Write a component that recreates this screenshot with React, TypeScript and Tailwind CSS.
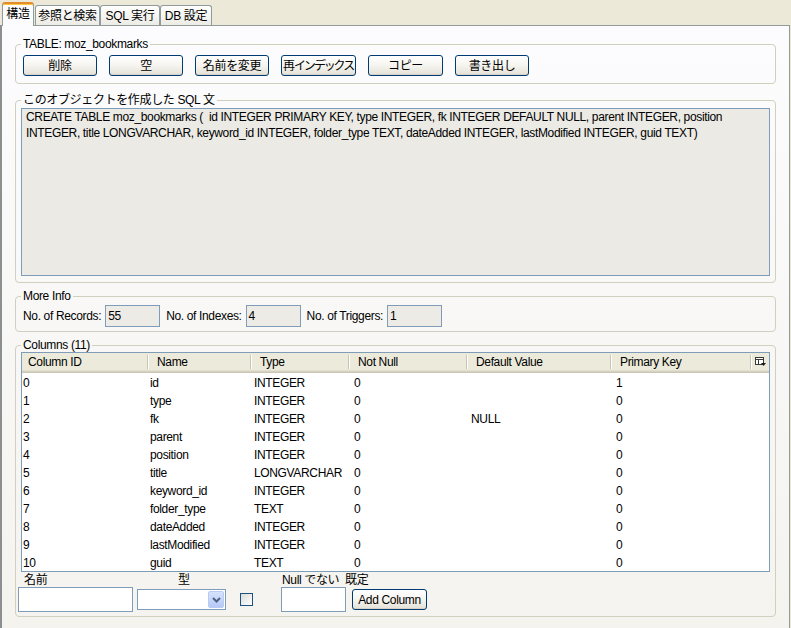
import React from "react";

type Row = { id: string; name: string; type: string; notNull: string; def: string; pk: string };

const rows: Row[] = [
  { id: "0", name: "id", type: "INTEGER", notNull: "0", def: "", pk: "1" },
  { id: "1", name: "type", type: "INTEGER", notNull: "0", def: "", pk: "0" },
  { id: "2", name: "fk", type: "INTEGER", notNull: "0", def: "NULL", pk: "0" },
  { id: "3", name: "parent", type: "INTEGER", notNull: "0", def: "", pk: "0" },
  { id: "4", name: "position", type: "INTEGER", notNull: "0", def: "", pk: "0" },
  { id: "5", name: "title", type: "LONGVARCHAR", notNull: "0", def: "", pk: "0" },
  { id: "6", name: "keyword_id", type: "INTEGER", notNull: "0", def: "", pk: "0" },
  { id: "7", name: "folder_type", type: "TEXT", notNull: "0", def: "", pk: "0" },
  { id: "8", name: "dateAdded", type: "INTEGER", notNull: "0", def: "", pk: "0" },
  { id: "9", name: "lastModified", type: "INTEGER", notNull: "0", def: "", pk: "0" },
  { id: "10", name: "guid", type: "TEXT", notNull: "0", def: "", pk: "0" },
];

const sql =
  "CREATE TABLE moz_bookmarks (  id INTEGER PRIMARY KEY, type INTEGER, fk INTEGER DEFAULT NULL, parent INTEGER, position\nINTEGER, title LONGVARCHAR, keyword_id INTEGER, folder_type TEXT, dateAdded INTEGER, lastModified INTEGER, guid TEXT)";

const gridCols = "grid grid-cols-[127px_103px_98px_118px_144px_140px_17px]";

const Tab = ({ label, active, width }: { label: string; active?: boolean; width: string }) =>
  active ? (
    <div
      className={`${width} relative z-10 -mb-px flex h-[24px] items-center justify-center rounded-t-[3px] border-x border-t-2 border-x-[#919b9c] border-t-[#e68b2c] bg-[#fcfcfe] pb-[3px] shadow-[inset_0_1px_0_#ffc83c]`}
    >
      {label}
    </div>
  ) : (
    <div
      className={`${width} flex h-[20px] items-center justify-center rounded-t-[3px] border-x border-t border-[#919b9c] bg-linear-to-b from-white to-[#ecebe5] pt-px`}
    >
      {label}
    </div>
  );

const XpButton = ({ label, className }: { label: string; className: string }) => (
  <button
    className={`${className} flex h-[21px] items-center justify-center whitespace-nowrap rounded-[3px] border border-[#003c74] bg-linear-to-b from-white via-[#f5f4ef] to-[#e3e1d7] text-[12px] text-black shadow-[inset_0_-1px_0_#d6d0c5]`}
  >
    {label}
  </button>
);

const GroupBox = ({
  title,
  className,
  children,
}: {
  title: string;
  className: string;
  children: React.ReactNode;
}) => (
  <fieldset className={`${className} rounded-[4px] border border-[#d0d0bf] px-[5px]`}>
    <legend className="px-[2px] leading-[14px]">{title}</legend>
    {children}
  </fieldset>
);

const HeaderCell = ({ label, first }: { label: string; first?: boolean }) => (
  <div className="flex h-full items-center">
    <span className={first ? "flex-1 pl-[6px]" : "flex-1 pl-[8px]"}>{label}</span>
    <span className="h-[14px] w-px bg-[#c7c5b2]" />
    <span className="h-[14px] w-px bg-white" />
  </div>
);

const ColumnChooserIcon = () => (
  <svg width="11" height="10" viewBox="0 0 11 10">
    <rect x="0.5" y="0.5" width="8" height="7" fill="#fff" stroke="#3b3b3b" />
    <line x1="0.5" y1="2.5" x2="8.5" y2="2.5" stroke="#3b3b3b" />
    <line x1="3.5" y1="2.5" x2="3.5" y2="7.5" stroke="#3b3b3b" />
    <path d="M6 6h5l-2.5 3z" fill="#1a1a1a" />
  </svg>
);

const InfoField = ({ label, value, className }: { label: string; value: string; className: string }) => (
  <div className={`${className} flex items-center`}>
    <span>{label}</span>
    <div className="ml-[4px] flex h-[22px] w-[55px] items-center border border-[#7f9db9] bg-[#ecebe6] pl-[2px]">
      {value}
    </div>
  </div>
);

export default function App() {
  const cellPad = ["pl-px", "pl-px", "pl-[2px]", "pl-[4px]", "pl-[3px]", "pl-[4px]"];

  return (
    <div className="flex h-[628px] w-[791px] flex-col overflow-hidden bg-[#ece9d8] font-['Liberation_Sans','Noto_Sans_CJK_JP',sans-serif] text-[12px] tracking-[-0.35px] text-black">
      {/* Tab strip */}
      <div className="flex h-[25px] shrink-0 items-end pl-[2px]">
        <Tab label="構造" active width="w-[32px]" />
        <div className="w-px" />
        <Tab label="参照と検索" width="w-[65px]" />
        <Tab label="SQL 実行" width="w-[60px]" />
        <Tab label="DB 設定" width="w-[52px]" />
      </div>

      {/* Tab panel */}
      <div className="flex h-[620px] w-[790px] shrink-0 flex-col border-y border-r border-l-2 border-[#919b9c] border-l-[#8b8f90] bg-linear-to-b from-[#fcfcfe] to-[#f4f3ee] pl-[13px] pr-[13px] pt-[11px]">
        <GroupBox title="TABLE: moz_bookmarks" className="pt-[4px] pb-[7px]">
          <div className="flex gap-[12px] pl-[2px]">
            <XpButton label="削除" className="w-[74px]" />
            <XpButton label="空" className="w-[74px]" />
            <XpButton label="名前を変更" className="w-[74px]" />
            <XpButton label="再インデックス" className="w-[75px] tracking-[-0.6px] [font-feature-settings:'palt']" />
            <XpButton label="コピー" className="w-[75px]" />
            <XpButton label="書き出し" className="w-[74px]" />
          </div>
        </GroupBox>

        <GroupBox title="このオブジェクトを作成した SQL 文" className="mt-[9px] pt-px pb-[6px]">
          <div className="h-[168px] whitespace-pre border border-[#7f9db9] bg-[#ebeae5] px-[4px] leading-[16px]">
            {sql}
          </div>
        </GroupBox>

        <GroupBox title="More Info" className="mt-[6px] pt-[2px] pb-[4px]">
          <div className="flex pl-[2px]">
            <InfoField label="No. of Records:" value="55" className="" />
            <InfoField label="No. of Indexes:" value="4" className="ml-[6px]" />
            <InfoField label="No. of Triggers:" value="1" className="ml-[6px]" />
          </div>
        </GroupBox>

        <GroupBox title="Columns (11)" className="mt-[6px] pb-[4px]">
          <div className="h-[220px] overflow-hidden border border-[#7f9db9] bg-white">
            <div
              className={`${gridCols} h-[20px] bg-[#ebeadb] pb-[3px] shadow-[inset_0_-1px_0_#cbc7b8,inset_0_-2px_0_#d6d2c2,inset_0_-3px_0_#e2decd]`}
            >
              <HeaderCell label="Column ID" first />
              <HeaderCell label="Name" />
              <HeaderCell label="Type" />
              <HeaderCell label="Not Null" />
              <HeaderCell label="Default Value" />
              <HeaderCell label="Primary Key" />
              <div className="flex items-center justify-center">
                <ColumnChooserIcon />
              </div>
            </div>
            {rows.map((r) => (
              <div key={r.id} className={`${gridCols} h-[18px] items-center pt-px`}>
                {[r.id, r.name, r.type, r.notNull, r.def, r.pk].map((v, i) => (
                  <span key={i} className={cellPad[i]}>
                    {v}
                  </span>
                ))}
                <span />
              </div>
            ))}
          </div>

          <div className="-ml-[4px] flex h-[15px] items-end leading-[13px]">
            <span className="ml-[7px] w-[154px]">名前</span>
            <span className="w-[104px]">型</span>
            <span className="w-[63px]">Null でない</span>
            <span>既定</span>
          </div>

          <div className="-ml-[4px] flex h-[25px] items-center">
            <div className="ml-px h-[25px] w-[115px] border border-[#7f9db9] bg-white" />
            <div className="ml-[4px] flex h-[21px] w-[89px] items-center justify-end border border-[#7f9db9] bg-white p-px">
              <div className="flex h-[17px] w-[16px] items-center justify-center rounded-[2px] border border-[#b9cbf3] bg-linear-to-b from-[#d6e3fd] to-[#b6c9f7]">
                <svg width="9" height="6" viewBox="0 0 9 6">
                  <path d="M1 1l3.5 3.5L8 1" fill="none" stroke="#4d6185" strokeWidth="2" />
                </svg>
              </div>
            </div>
            <div className="ml-[14px] h-[13px] w-[13px] border border-[#1c5180] bg-linear-to-br from-[#dcdcd7] to-white" />
            <div className="ml-[28px] h-[25px] w-[65px] border border-[#7f9db9] bg-white" />
            <XpButton label="Add Column" className="ml-[6px] w-[75px]" />
          </div>
        </GroupBox>
      </div>
    </div>
  );
}
